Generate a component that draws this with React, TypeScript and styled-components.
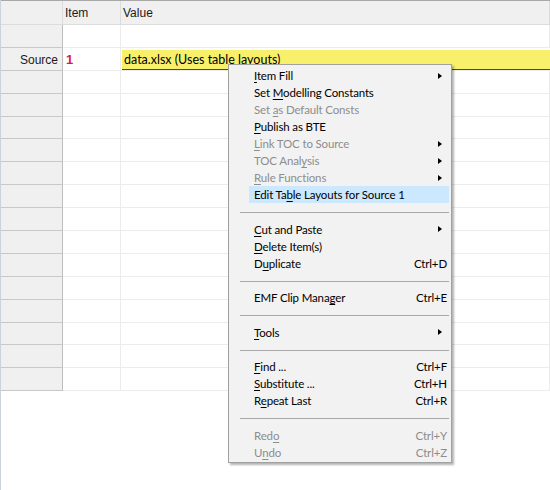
import React from "react";
import styled, { createGlobalStyle } from "styled-components";

const GlobalStyle = createGlobalStyle`
  html, body {
    margin: 0;
    padding: 0;
    background: #ffffff;
  }
  body {
    overflow: hidden;
  }
`;

const Page = styled.div`
  position: relative;
  width: 550px;
  height: 490px;
  background: #ffffff;
  border-left: 1px solid #c9d3dd;
  box-sizing: border-box;
  font-family: "Liberation Sans", Arial, sans-serif;
  font-size: 12px;
  color: #000;
  overflow: hidden;
`;

const Grid = styled.div`
  display: grid;
  grid-template-columns: 62px 58px 1fr;
  grid-template-rows: 24px;
  grid-auto-rows: 22.9px;
  border-top: 1px solid #a8a8a8;
`;

const HeaderCell = styled.div`
  display: flex;
  align-items: center;
  padding-left: 2px;
  background: #f0f0f0;
  border-right: 1px solid #dcdcdc;
  border-bottom: 1px solid #dcdcdc;
  color: #1a1a1a;
`;

const RowHead = styled.div`
  display: flex;
  align-items: center;
  justify-content: flex-end;
  padding: 2px 4px 0 0;
  background: #f0f0f0;
  border-right: 1px solid #bdbdbd;
  border-bottom: 1px solid #c8c8c8;
  color: #1a1a1a;
`;

const Cell = styled.div`
  display: flex;
  align-items: center;
  padding: 2px 0 0 3px;
  background: #ffffff;
  border-right: 1px solid #ececec;
  border-bottom: 1px solid #ececec;
  min-width: 0;
`;

const ItemNumber = styled.span`
  font-size: 13px;
  font-weight: bold;
  color: #d81b4f;
`;

const ValueCell = styled.div`
  display: flex;
  border-bottom: 1px solid #ececec;
  min-width: 0;
`;

const ValueBox = styled.div`
  flex: 1;
  display: flex;
  align-items: center;
  margin: 2px 0 0 1px;
  padding: 1px 0 0 2px;
  background: #f8f06b;
  border-bottom: 1px solid #4a4a4a;
  font-family: Lato, "Noto Sans", sans-serif;
  font-size: 12.5px;
  white-space: nowrap;
`;

const Menu = styled.div`
  position: absolute;
  left: 227px;
  top: 64px;
  width: 224px;
  box-sizing: border-box;
  padding: 2px 0 1px;
  background: #f2f2f2;
  border: 1px solid #a0a0a0;
  box-shadow: 2px 2px 2px rgba(0, 0, 0, 0.3);
  font-family: Lato, "Noto Sans", sans-serif;
  font-size: 11.5px;
  letter-spacing: -0.15px;
`;

const Item = styled.div<{ $active?: boolean; $disabled?: boolean }>`
  display: flex;
  align-items: center;
  height: 17px;
  margin: 0 2px 0 20px;
  padding-left: 5px;
  background: ${(p) => (p.$active ? "#cce8ff" : "transparent")};
  color: ${(p) => (p.$disabled ? "#8d8d8d" : "#000")};
  white-space: nowrap;
`;

const Label = styled.span`
  flex: 1;
`;

const Mnemonic = styled.span`
  text-decoration: underline;
  text-underline-offset: 2px;
`;

const Shortcut = styled.span`
  padding-right: 2px;
`;

const Arrow = styled.span`
  width: 0;
  height: 0;
  margin-right: 7px;
  border-left: 4px solid #000;
  border-top: 3.5px solid transparent;
  border-bottom: 3.5px solid transparent;
`;

const Separator = styled.div`
  height: 1px;
  margin: 9px 2px 7.6px 11px;
  background: #a8a8a8;
`;

type Entry =
  | { sep: true }
  | {
      sep?: false;
      label: string;
      shortcut?: string;
      sub?: boolean;
      disabled?: boolean;
      active?: boolean;
    };

const menu: Entry[] = [
  { label: "&Item Fill", sub: true },
  { label: "Set &Modelling Constants" },
  { label: "Set &as Default Consts", disabled: true },
  { label: "&Publish as BTE" },
  { label: "&Link TOC to Source", sub: true, disabled: true },
  { label: "TOC Anal&ysis", sub: true, disabled: true },
  { label: "&Rule Functions", sub: true, disabled: true },
  { label: "Edit Ta&ble Layouts for Source 1", active: true },
  { sep: true },
  { label: "&Cut and Paste", sub: true },
  { label: "&Delete Item(s)" },
  { label: "D&uplicate", shortcut: "Ctrl+D" },
  { sep: true },
  { label: "EMF Clip Mana&ger", shortcut: "Ctrl+E" },
  { sep: true },
  { label: "&Tools", sub: true },
  { sep: true },
  { label: "&Find ...", shortcut: "Ctrl+F" },
  { label: "&Substitute ...", shortcut: "Ctrl+H" },
  { label: "R&epeat Last", shortcut: "Ctrl+R" },
  { sep: true },
  { label: "Red&o", shortcut: "Ctrl+Y", disabled: true },
  { label: "U&ndo", shortcut: "Ctrl+Z", disabled: true },
];

const MenuLabel = ({ text }: { text: string }) => {
  const i = text.indexOf("&");
  if (i < 0) return <Label>{text}</Label>;
  return (
    <Label>
      {text.slice(0, i)}
      <Mnemonic>{text[i + 1]}</Mnemonic>
      {text.slice(i + 2)}
    </Label>
  );
};

const EMPTY_ROWS = 14;

const App = () => {
  return (
    <Page>
      <GlobalStyle />
      <Grid>
        <HeaderCell />
        <HeaderCell>Item</HeaderCell>
        <HeaderCell>Value</HeaderCell>

        <RowHead />
        <Cell />
        <Cell />

        <RowHead>Source</RowHead>
        <Cell>
          <ItemNumber>1</ItemNumber>
        </Cell>
        <ValueCell>
          <ValueBox>data.xlsx (Uses table layouts)</ValueBox>
        </ValueCell>

        {Array.from({ length: EMPTY_ROWS }).map((_, r) => (
          <React.Fragment key={r}>
            <RowHead />
            <Cell />
            <Cell />
          </React.Fragment>
        ))}
      </Grid>

      <Menu>
        {menu.map((e, i) =>
          e.sep ? (
            <Separator key={i} />
          ) : (
            <Item key={i} $active={e.active} $disabled={e.disabled}>
              <MenuLabel text={e.label} />
              {e.shortcut && <Shortcut>{e.shortcut}</Shortcut>}
              {e.sub && <Arrow />}
            </Item>
          )
        )}
      </Menu>
    </Page>
  );
};

export default App;
